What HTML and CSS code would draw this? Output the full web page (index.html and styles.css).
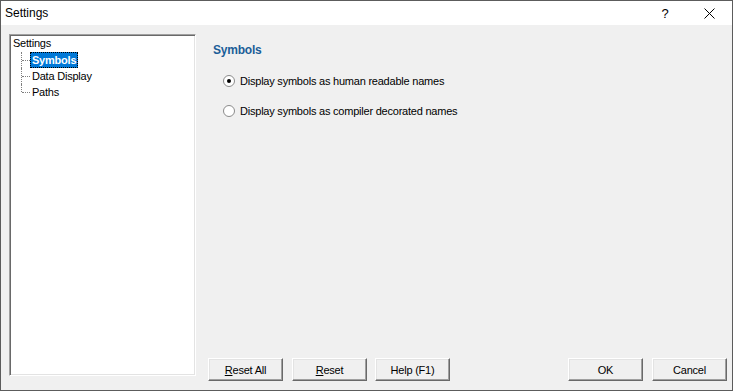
FILE: index.html
```html
<!DOCTYPE html>
<html lang="en">
<head>
    <meta charset="UTF-8">
    <title>Settings</title>
    <link rel="stylesheet" href="styles.css">
</head>
<body>
    <div class="window">
        <div class="titlebar">
            <span class="title">Settings</span>
            <div class="title-buttons">
                <span class="help-btn">?</span>
                <span class="close-btn">
                    <svg width="11" height="11" viewBox="0 0 11 11"><path d="M0.5 0.5 L10.5 10.5 M10.5 0.5 L0.5 10.5" stroke="#000" stroke-width="1" fill="none"/></svg>
                </span>
            </div>
        </div>
        <div class="content">
            <div class="tree">
                <div class="tree-root">Settings</div>
                <ul class="tree-children">
                    <li><span class="node selected">Symbols</span></li>
                    <li><span class="node">Data Display</span></li>
                    <li><span class="node">Paths</span></li>
                </ul>
            </div>
            <div class="panel">
                <div class="page">
                    <div class="page-title">Symbols</div>
                    <label class="radio">
                        <svg class="radio-mark" width="12" height="12" viewBox="0 0 12 12">
                            <circle cx="6" cy="6" r="5.5" fill="#fff" stroke="#8a8a8a"/>
                            <circle cx="6" cy="6" r="2" fill="#000"/>
                        </svg>
                        Display symbols as human readable names
                    </label>
                    <label class="radio">
                        <svg class="radio-mark" width="12" height="12" viewBox="0 0 12 12">
                            <circle cx="6" cy="6" r="5.5" fill="#fff" stroke="#8a8a8a"/>
                        </svg>
                        Display symbols as compiler decorated names
                    </label>
                </div>
                <div class="button-row">
                    <button><u>R</u>eset All</button>
                    <button><u>R</u>eset</button>
                    <button class="help">Help (F1)</button>
                    <div class="spacer"></div>
                    <button>OK</button>
                    <button>Cancel</button>
                </div>
            </div>
        </div>
    </div>
</body>
</html>
```

FILE: styles.css
```css
html, body {
    margin: 0;
    padding: 0;
}
body {
    font-family: "Liberation Sans", Arial, sans-serif;
    font-size: 11px;
    letter-spacing: -0.22px;
    color: #000;
    background-color: #f0f0f0;
}
.window {
    width: 733px;
    height: 391px;
    box-sizing: border-box;
    border: 1px solid #5c5c5c;
    background-color: #f0f0f0;
    display: flex;
    flex-direction: column;
}
.titlebar {
    height: 24px;
    background-color: #fff;
    display: flex;
    align-items: center;
    justify-content: space-between;
    padding-left: 4px;
}
.title {
    font-size: 12px;
    letter-spacing: 0;
}
.title-buttons {
    display: flex;
    align-items: center;
}
.help-btn {
    font-size: 13px;
    width: 46px;
    text-align: center;
    margin-right: -2px;
}
.close-btn {
    width: 46px;
    display: flex;
    justify-content: center;
}
.content {
    flex: 1;
    display: flex;
    padding: 9px 5px 9px 8px;
}
.tree {
    width: 187px;
    height: 342px;
    box-sizing: border-box;
    background-color: #fff;
    border-top: 1px solid #a0a0a0;
    border-left: 1px solid #a0a0a0;
    border-bottom: 1px solid #fff;
    border-right: 1px solid #fff;
    box-shadow: inset 1px 1px 0 #696969, inset -1px -1px 0 #e3e3e3;
    padding: 1px 0 0 3px;
}
.tree-root {
    height: 16px;
    line-height: 15px;
}
.tree-children {
    list-style: none;
    margin: 0;
    padding: 0 0 0 8px;
}
.tree-children li {
    position: relative;
    height: 16px;
    padding-left: 9px;
}
.tree-children li::before {
    content: "";
    position: absolute;
    left: 0;
    top: 0;
    bottom: 0;
    border-left: 1px dotted #7f7f7f;
}
.tree-children li:last-child::before {
    bottom: 8px;
}
.tree-children li::after {
    content: "";
    position: absolute;
    left: 1px;
    top: 8px;
    width: 8px;
    border-top: 1px dotted #7f7f7f;
}
.node {
    display: inline-block;
    height: 14px;
    line-height: 14px;
    padding: 0 1px;
    border: 1px solid transparent;
}
.node.selected {
    background-color: #0078d7;
    color: #fff;
    font-weight: bold;
    border: 1px dotted #000;
}
.panel {
    flex: 1;
    display: flex;
    flex-direction: column;
    margin-left: 12px;
}
.page {
    flex: 1;
    padding: 9px 0 0 5px;
}
.page-title {
    font-size: 12px;
    font-weight: bold;
    color: #1b5e98;
    margin-bottom: 17px;
}
.radio {
    display: flex;
    align-items: center;
    margin-left: 10px;
    height: 13px;
    margin-bottom: 17px;
}
.radio-mark {
    margin-right: 5px;
}
.button-row {
    display: flex;
    align-items: center;
    gap: 9px;
}
.button-row .help {
    margin-left: -1px;
}
.spacer {
    flex: 1;
}
button {
    width: 75px;
    height: 23px;
    box-sizing: border-box;
    font-family: "Liberation Sans", Arial, sans-serif;
    font-size: 11px;
    letter-spacing: -0.22px;
    color: #000;
    background-color: #f0f0f0;
    border-top: 1px solid #fff;
    border-left: 1px solid #fff;
    border-bottom: 1px solid #696969;
    border-right: 1px solid #696969;
    box-shadow: inset -1px -1px 0 #a0a0a0, inset 1px 1px 0 #e3e3e3;
    padding: 0;
}
```
